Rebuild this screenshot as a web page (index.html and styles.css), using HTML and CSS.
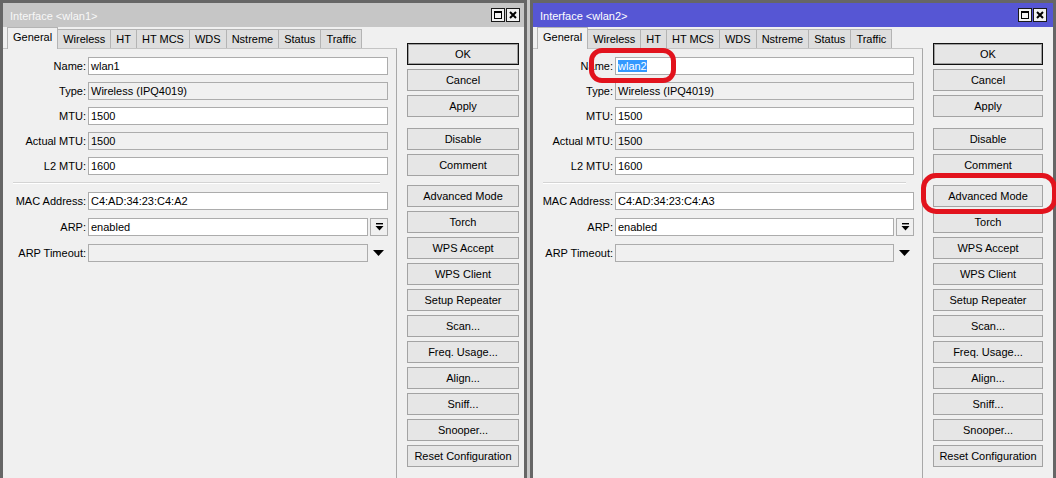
FILE: index.html
```html
<!DOCTYPE html>
<html>
<head>
<meta charset="utf-8">
<link rel="stylesheet" href="styles.css">
</head>
<body>
<div class="desk">
  <div class="win win-left">
    <div class="titlebar">
      <span class="title">Interface &lt;wlan1&gt;</span>
      <div class="tbtns">
        <span class="tbtn"><span class="maxico"></span></span>
        <span class="tbtn"><svg width="8" height="8" viewBox="0 0 8 8"><path d="M1 1L7 7M7 1L1 7" stroke="#000" stroke-width="2"/></svg></span>
      </div>
    </div>
    <div class="wbody">
      <div class="main">
        <div class="tabs">
          <span class="tab active">General</span><span class="tab">Wireless</span><span class="tab">HT</span><span class="tab">HT MCS</span><span class="tab">WDS</span><span class="tab">Nstreme</span><span class="tab">Status</span><span class="tab">Traffic</span>
        </div>
        <div class="panel">
          <div class="row"><span class="lbl">Name:</span><span class="field">wlan1</span></div>
          <div class="row"><span class="lbl">Type:</span><span class="field ro">Wireless (IPQ4019)</span></div>
          <div class="row"><span class="lbl">MTU:</span><span class="field">1500</span></div>
          <div class="row"><span class="lbl">Actual MTU:</span><span class="field ro">1500</span></div>
          <div class="row"><span class="lbl">L2 MTU:</span><span class="field">1600</span></div>
          <div class="hsep"></div>
          <div class="row"><span class="lbl">MAC Address:</span><span class="field">C4:AD:34:23:C4:A2</span></div>
          <div class="row"><span class="lbl">ARP:</span><span class="field">enabled</span><span class="ddbtn"><svg width="9" height="8" viewBox="0 0 9 8"><rect x="1" y="0" width="7" height="1.4" fill="#000"/><path d="M0.5 3H8.5L4.5 7.5Z" fill="#000"/></svg></span></div>
          <div class="row"><span class="lbl">ARP Timeout:</span><span class="field ro"></span><span class="ddarrow"><svg width="11" height="6" viewBox="0 0 11 6"><path d="M0 0H11L5.5 6Z" fill="#000"/></svg></span></div>
        </div>
      </div>
      <div class="buttons">
        <span class="btn default">OK</span>
        <span class="btn">Cancel</span>
        <span class="btn">Apply</span>
        <span class="btn grp1">Disable</span>
        <span class="btn">Comment</span>
        <span class="btn grp2">Advanced Mode</span>
        <span class="btn">Torch</span>
        <span class="btn">WPS Accept</span>
        <span class="btn">WPS Client</span>
        <span class="btn">Setup Repeater</span>
        <span class="btn">Scan...</span>
        <span class="btn">Freq. Usage...</span>
        <span class="btn">Align...</span>
        <span class="btn">Sniff...</span>
        <span class="btn">Snooper...</span>
        <span class="btn">Reset Configuration</span>
      </div>
    </div>
  </div>

  <div class="win win-right">
    <div class="titlebar">
      <span class="title">Interface &lt;wlan2&gt;</span>
      <div class="tbtns">
        <span class="tbtn"><span class="maxico"></span></span>
        <span class="tbtn"><svg width="8" height="8" viewBox="0 0 8 8"><path d="M1 1L7 7M7 1L1 7" stroke="#000" stroke-width="2"/></svg></span>
      </div>
    </div>
    <div class="wbody">
      <div class="main">
        <div class="tabs">
          <span class="tab active">General</span><span class="tab">Wireless</span><span class="tab">HT</span><span class="tab">HT MCS</span><span class="tab">WDS</span><span class="tab">Nstreme</span><span class="tab">Status</span><span class="tab">Traffic</span>
        </div>
        <div class="panel">
          <div class="row"><span class="lbl">Name:</span><span class="field"><span class="sel">wlan2</span></span></div>
          <div class="row"><span class="lbl">Type:</span><span class="field ro">Wireless (IPQ4019)</span></div>
          <div class="row"><span class="lbl">MTU:</span><span class="field">1500</span></div>
          <div class="row"><span class="lbl">Actual MTU:</span><span class="field ro">1500</span></div>
          <div class="row"><span class="lbl">L2 MTU:</span><span class="field">1600</span></div>
          <div class="hsep"></div>
          <div class="row"><span class="lbl">MAC Address:</span><span class="field">C4:AD:34:23:C4:A3</span></div>
          <div class="row"><span class="lbl">ARP:</span><span class="field">enabled</span><span class="ddbtn"><svg width="9" height="8" viewBox="0 0 9 8"><rect x="1" y="0" width="7" height="1.4" fill="#000"/><path d="M0.5 3H8.5L4.5 7.5Z" fill="#000"/></svg></span></div>
          <div class="row"><span class="lbl">ARP Timeout:</span><span class="field ro"></span><span class="ddarrow"><svg width="11" height="6" viewBox="0 0 11 6"><path d="M0 0H11L5.5 6Z" fill="#000"/></svg></span></div>
        </div>
      </div>
      <div class="buttons">
        <span class="btn default">OK</span>
        <span class="btn">Cancel</span>
        <span class="btn">Apply</span>
        <span class="btn grp1">Disable</span>
        <span class="btn">Comment</span>
        <span class="btn grp2">Advanced Mode</span>
        <span class="btn">Torch</span>
        <span class="btn">WPS Accept</span>
        <span class="btn">WPS Client</span>
        <span class="btn">Setup Repeater</span>
        <span class="btn">Scan...</span>
        <span class="btn">Freq. Usage...</span>
        <span class="btn">Align...</span>
        <span class="btn">Sniff...</span>
        <span class="btn">Snooper...</span>
        <span class="btn">Reset Configuration</span>
      </div>
    </div>
  </div>

  <div class="mark mark-name"></div>
  <div class="mark mark-adv"></div>
</div>
</body>
</html>
```

FILE: styles.css
```css
html, body {
  margin: 0;
  padding: 0;
}
body {
  width: 1056px;
  height: 478px;
  overflow: hidden;
  background: #c8c8c8;
  font-family: "Liberation Sans", Arial, sans-serif;
  font-size: 11px;
  color: #000;
}
.desk {
  position: relative;
  display: flex;
  gap: 3px;
  height: 478px;
  overflow: hidden;
}
.win {
  box-sizing: border-box;
  height: 500px;
  border: 3px solid #666;
  border-bottom: none;
  background: #f0f0f0;
  flex: none;
}
.win-left { width: 527px; }
.win-right { width: 526px; }

.titlebar {
  height: 24px;
  display: flex;
  align-items: center;
  padding: 2px 4px 0 7px;
  box-sizing: border-box;
  background: #c6c6c6;
  color: #f8f8f8;
}
.win-right .titlebar {
  background: #5656d4;
  color: #fff;
  padding-right: 6px;
}
.title { flex: 1; }
.tbtns { display: flex; gap: 1px; margin-top: -2px; }
.tbtn {
  box-sizing: border-box;
  width: 14px;
  height: 14px;
  border: 1px solid #1a1a1a;
  background: #f2f2f2;
  display: flex;
  align-items: center;
  justify-content: center;
}
.maxico {
  box-sizing: border-box;
  width: 8px;
  height: 8px;
  border: 1px solid #000;
  border-top-width: 2px;
}

.wbody { display: flex; }
.main { width: 394px; flex: none; }
.win-right .main { width: 390px; }

.tabs {
  display: flex;
  align-items: flex-end;
  height: 21px;
  padding-left: 5px;
}
.tab {
  box-sizing: border-box;
  height: 19px;
  line-height: 19px;
  padding: 0 5px;
  margin-left: -1px;
  border: 1px solid #b4b4b4;
  border-bottom: none;
  background: #dedede;
  white-space: nowrap;
}
.tab.active {
  height: 22px;
  line-height: 18px;
  margin-bottom: -1px;
  background: #f0f0f0;
  position: relative;
  z-index: 1;
}

.panel {
  border-top: 1px solid #c4c4c4;
  border-right: 1px solid #a8a8a8;
  padding: 8px 8px 0 0;
  height: 460px;
}
.row {
  display: flex;
  align-items: center;
  height: 18px;
  margin-bottom: 7px;
}
.lbl {
  width: 83px;
  padding-right: 2px;
  text-align: right;
  flex: none;
  white-space: nowrap;
}
.win-right .lbl { width: 80px; }
.field {
  box-sizing: border-box;
  flex: 1;
  height: 18px;
  line-height: 16px;
  padding-left: 2px;
  border: 1px solid #acacac;
  background: #fff;
  white-space: nowrap;
}
.field.ro { background: #f0f0f0; }
.sel {
  background: #3399ff;
  color: #fff;
}
.ddbtn {
  box-sizing: border-box;
  width: 18px;
  height: 18px;
  margin-left: 2px;
  border: 1px solid #acacac;
  background: #f0f0f0;
  display: flex;
  align-items: center;
  justify-content: center;
}
.ddarrow {
  width: 20px;
  height: 18px;
  display: flex;
  align-items: center;
  justify-content: center;
}
.hsep {
  margin: 2px 8px 8px 10px;
  border-top: 1px solid #d4d4d4;
  border-bottom: 1px solid #fff;
}
.hsep + .row { margin-top: 0; }
.hsep ~ .row { margin-bottom: 8px; }

.buttons {
  margin-left: 10px;
  width: 112px;
  padding-top: 16px;
  display: flex;
  flex-direction: column;
  gap: 4px;
}
.win-right .buttons { width: 110px; }
.btn {
  box-sizing: border-box;
  height: 22px;
  line-height: 20px;
  text-align: center;
  border: 1px solid #a3a3a3;
  background: #e6e6e6;
  white-space: nowrap;
}
.btn.default {
  border-color: #111;
  box-shadow: inset 0 0 0 1px #a0a0a0;
}
.btn.grp1 { margin-top: 7px; }
.btn.grp2 { margin-top: 5px; }

.mark {
  position: absolute;
  box-sizing: border-box;
  border: 5px solid #e2131d;
  z-index: 5;
}
.mark-name {
  left: 589px;
  top: 48px;
  width: 87px;
  height: 35px;
  border-radius: 13px;
}
.mark-adv {
  left: 921px;
  top: 173px;
  width: 136px;
  height: 41px;
  border-radius: 15px;
}
```
